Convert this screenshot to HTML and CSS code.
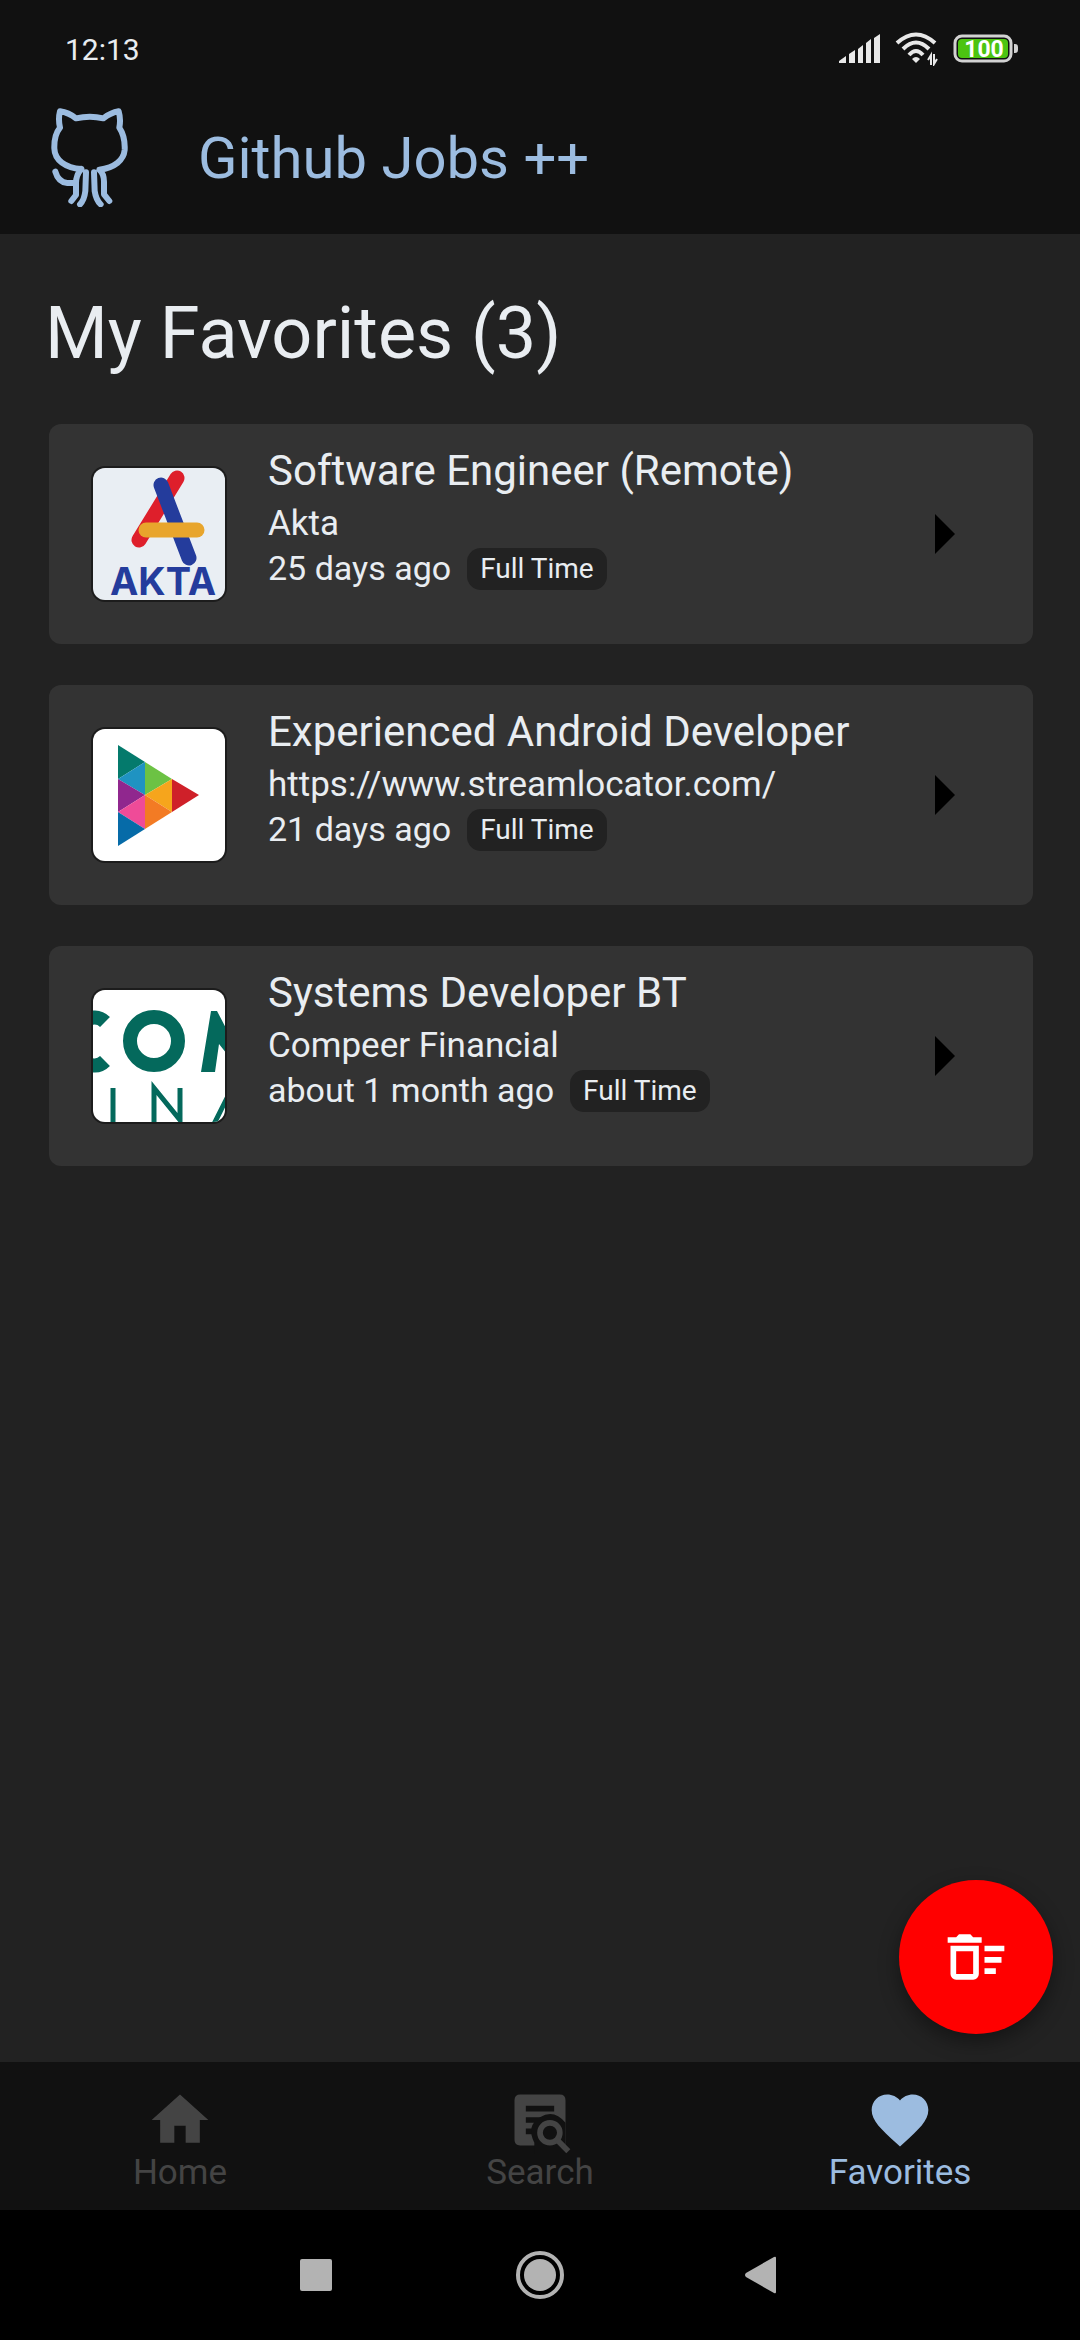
FILE: index.html
```html
<!DOCTYPE html>
<html lang="en">
<head>
<meta charset="utf-8">
<meta name="viewport" content="width=device-width, initial-scale=1">
<title>Github Jobs ++</title>
<link rel="stylesheet" href="styles.css">
</head>
<body>
<div class="app">
  <header class="header">
    <div class="status">
      <span class="clock">12:13</span>
      <div class="status-icons">
        <svg width="42" height="30" viewBox="0 0 42 30" fill="#e8e8e8" aria-hidden="true">
          <path d="M0 29V27L7 22V29ZM10 29V20L16 16V29ZM19 29V15L24 11V29ZM27 29V9L32 5V29ZM35 29V4L41 0V29Z"/>
        </svg>
        <svg width="44" height="34" viewBox="0 0 44 34" fill="none" stroke="#e8e8e8" stroke-width="4" aria-hidden="true">
          <path d="M2 11Q21 -6 40 11M8 17Q21 4 34 17M14 23Q21 15 28 23"/>
          <path d="M17 27Q21 23 25 27L21 31Z" fill="#e8e8e8" stroke="none"/>
          <path d="M36 33V23L33 28M39 22V32L42 27" stroke-width="2"/>
        </svg>
        <svg width="66" height="30" viewBox="0 0 66 30" aria-label="Battery 100">
          <rect x="2" y="2" width="56" height="25" rx="7" fill="#111" stroke="#d2d2d2" stroke-width="3"/>
          <rect x="5" y="5" width="50" height="19" rx="4" fill="#4cc411"/>
          <path d="M61 10h1q3 0 3 3v3q0 3-3 3h-1z" fill="#d2d2d2"/>
          <text class="battery-text" x="31" y="23" text-anchor="middle">100</text>
        </svg>
      </div>
    </div>
    <div class="app-bar">
      <svg class="octocat" viewBox="30 36 240 300" aria-hidden="true">
        <path d="M124 222C75 218 44 195 43 160Q42 120 60 98Q54 72 60 49Q86 53 108 70Q150 60 190 70Q212 53 236 49Q243 72 238 98Q256 125 254 165C251 195 225 218 178 224Q192 236 192 260V298L208 318M124 222Q108 240 108 264V300L94 318M46 230Q55 262 82 264H106M138 232L136 288Q133 315 120 328M162 232L164 288Q168 315 182 328"/>
      </svg>
      <span class="app-name">Github Jobs ++</span>
    </div>
  </header>

  <main class="main">
    <h1 class="heading">My Favorites (3)</h1>
    <ul class="jobs">
      <li>
        <a class="card" href="#akta">
          <svg class="logo" viewBox="0 0 132 132" aria-hidden="true">
            <rect width="132" height="132" fill="#e9eef3"/>
            <g fill="none" stroke-width="15" stroke-linecap="round">
              <path d="M46 72L84 10" stroke="#de1f2b"/>
              <path d="M68 17L96 90" stroke="#243c9c"/>
              <path d="M53 62H104" stroke="#e8a52c"/>
            </g>
            <text class="akta-text" x="70" y="127" text-anchor="middle">AKTA</text>
          </svg>
          <div class="info">
            <h2 class="title">Software Engineer (Remote)</h2>
            <p class="line company">Akta</p>
            <p class="line meta">25 days ago <span class="badge">Full Time</span></p>
          </div>
          <svg class="arrow" viewBox="0 0 20 40" aria-hidden="true"><path d="M0 0L20 20L0 40Z"/></svg>
        </a>
      </li>
      <li>
        <a class="card" href="#streamlocator">
          <svg class="logo" viewBox="0 0 132 132" aria-hidden="true">
            <rect width="132" height="132" fill="#fff"/>
            <path d="M25 16L52 33L25 50Z" fill="#047a6c"/>
            <path d="M25 50L52 33V66Z" fill="#1f93c2"/>
            <path d="M52 33L79 50L52 66Z" fill="#6cc244"/>
            <path d="M25 50L52 66L25 83Z" fill="#90278e"/>
            <path d="M52 66L79 50V83Z" fill="#f6a51c"/>
            <path d="M79 50L106 66L79 83Z" fill="#cf2029"/>
            <path d="M25 83L52 66V100Z" fill="#ef4b98"/>
            <path d="M52 66L79 83L52 100Z" fill="#f37b24"/>
            <path d="M25 83L52 100L25 117Z" fill="#066ba8"/>
          </svg>
          <div class="info">
            <h2 class="title">Experienced Android Developer</h2>
            <p class="line company">https://www.streamlocator.com/</p>
            <p class="line meta">21 days ago <span class="badge">Full Time</span></p>
          </div>
          <svg class="arrow" viewBox="0 0 20 40" aria-hidden="true"><path d="M0 0L20 20L0 40Z"/></svg>
        </a>
      </li>
      <li>
        <a class="card" href="#compeer">
          <svg class="logo" viewBox="0 0 132 132" aria-hidden="true">
            <rect width="132" height="132" fill="#fff"/>
            <g fill="none" stroke="#04695c">
              <path d="M12 32Q6 26 -2 28M12 71Q6 77 -2 75" stroke-width="14"/>
              <circle cx="61" cy="51" r="24" stroke-width="14"/>
              <path d="M108 82L118 21H124L134 40V64L126 54L122 82Z" fill="#04695c" stroke="none"/>
              <path d="M20 98V134M61 134V98L87 130V98M121 134L136 104" stroke-width="5"/>
            </g>
          </svg>
          <div class="info">
            <h2 class="title">Systems Developer BT</h2>
            <p class="line company">Compeer Financial</p>
            <p class="line meta">about 1 month ago <span class="badge">Full Time</span></p>
          </div>
          <svg class="arrow" viewBox="0 0 20 40" aria-hidden="true"><path d="M0 0L20 20L0 40Z"/></svg>
        </a>
      </li>
    </ul>
    <button class="fab" type="button" aria-label="Clear favorites">
      <svg width="68" height="68" viewBox="0 0 24 24" fill="#fff" aria-hidden="true">
        <path d="M15 16h4v2h-4v-2m0-8h7v2h-7V8m0 4h6v2h-6v-2M3 18a2 2 0 0 0 2 2h6a2 2 0 0 0 2-2V8H3v10m2-8h6v8H5v-8m5-6H6L5 5H2v2h12V5h-3l-1-1z"/>
      </svg>
    </button>
  </main>

  <nav class="tabs" aria-label="Main">
    <a class="tab" href="#home">
      <svg class="tab-icon" viewBox="0 0 24 24" aria-hidden="true"><path d="M10 20v-6h4v6h5v-8h3L12 3 2 12h3v8z"/></svg>
      <span>Home</span>
    </a>
    <a class="tab" href="#search">
      <svg class="tab-icon" viewBox="0 0 24 24" aria-hidden="true">
        <path fill-rule="evenodd" d="M5 3H19Q21 3 21 5V21H5Q3 21 3 19V5Q3 3 5 3ZM7 7V9H17V7ZM7 11V13H15V11ZM7 15V17H12V15Z"/>
        <path fill="#111" d="M21 13V24H10V20Q7 14 12 11Q17 8 21 13Z"/>
        <circle cx="15.500" cy="16.500" r="3.500" fill="#111" stroke="currentColor" stroke-width="2"/>
        <path fill="none" stroke="currentColor" stroke-width="2" d="M18 19L22 23"/>
      </svg>
      <span>Search</span>
    </a>
    <a class="tab tab-active" href="#favorites" aria-current="page">
      <svg class="tab-icon" viewBox="0 0 24 24" aria-hidden="true"><path d="M12 21.350l-1.450-1.320C5.400 15.360 2 12.270 2 8.500 2 5.410 4.420 3 7.500 3c1.740 0 3.410.810 4.500 2.080C13.090 3.810 14.760 3 16.500 3 19.580 3 22 5.410 22 8.500c0 3.770-3.400 6.860-8.550 11.530L12 21.350z"/></svg>
      <span>Favorites</span>
    </a>
  </nav>

  <div class="system-nav">
    <button class="sys" type="button" aria-label="Recent apps">
      <svg width="32" height="32" viewBox="0 0 32 32"><rect width="32" height="32" rx="2"/></svg>
    </button>
    <button class="sys" type="button" aria-label="Home screen">
      <svg width="50" height="50" viewBox="0 0 50 50"><circle cx="25" cy="25" r="22" fill="none" stroke="#b3b3b3" stroke-width="4"/><circle cx="25" cy="25" r="16"/></svg>
    </button>
    <button class="sys" type="button" aria-label="Back">
      <svg width="38" height="38" viewBox="0 0 38 38"><path d="M1 17Q-1 19 1 21L29 37Q31 38 31 36V2Q31 0 29 1Z"/></svg>
    </button>
  </div>
</div>
</body>
</html>
```
FILE: styles.css
```css
* {
  box-sizing: border-box;
  margin: 0;
  padding: 0;
}

body {
  background: #222;
  color: #e9edf1;
  font-family: Roboto, "Noto Sans", sans-serif;
}

svg {
  display: block;
  flex: none;
}

a {
  color: inherit;
  text-decoration: none;
}

button {
  border: 0;
  cursor: pointer;
}

.app {
  display: flex;
  flex-direction: column;
  min-height: 100vh;
}

/* Status bar and app bar */

.header {
  background: #111;
  padding-bottom: 18px;
}

.status {
  display: flex;
  align-items: center;
  justify-content: space-between;
  height: 98px;
  padding: 0 61px 0 65px;
}

.clock {
  font-size: 30px;
}

.status-icons {
  display: flex;
  align-items: center;
  gap: 14px;
}

.battery-text {
  font-size: 23px;
  font-weight: 700;
  fill: #fff;
}

.app-bar {
  display: flex;
  align-items: center;
  gap: 68px;
  height: 118px;
  padding: 0 50px;
  color: #9cbce0;
}

.octocat {
  width: 80px;
  height: 100px;
  fill: none;
  stroke: currentColor;
  stroke-width: 18;
  stroke-linecap: round;
  stroke-linejoin: round;
}

.app-name {
  padding-top: 2px;
  font-size: 58px;
}

/* Favorites list */

.main {
  position: relative;
  flex: 1;
  padding: 58px 47px 200px 45px;
}

.heading {
  font-size: 72px;
  font-weight: 400;
  line-height: 84px;
}

.jobs {
  display: grid;
  gap: 41px;
  margin: 48px 0 0 4px;
  list-style: none;
}

.card {
  display: flex;
  align-items: center;
  min-height: 220px;
  padding: 0 78px 0 42px;
  border-radius: 12px;
  background: #333;
}

.logo {
  width: 136px;
  height: 136px;
  border: 2px solid #1c1c1c;
  border-radius: 14px;
}

.akta-text {
  font-family: Inter, sans-serif;
  font-size: 38px;
  font-weight: 700;
  fill: #243c9c;
}

.info {
  flex: 1;
  align-self: flex-start;
  padding: 17px 20px 16px 41px;
}

.title {
  font-size: 42px;
  font-weight: 400;
  line-height: 60px;
}

.line {
  font-size: 34px;
  line-height: 45px;
}

.company {
  font-size: 35px;
}

.meta {
  display: flex;
  align-items: center;
  gap: 16px;
}

.badge {
  padding: 0 13px;
  border-radius: 14px;
  background: #222;
  font-size: 28px;
  line-height: 42px;
}

.arrow {
  width: 20px;
  height: 40px;
  fill: #000;
}

.fab {
  position: absolute;
  right: 27px;
  bottom: 28px;
  display: grid;
  place-items: center;
  width: 154px;
  height: 154px;
  border-radius: 50%;
  background: #f00;
  box-shadow: 0 8px 20px rgba(0, 0, 0, 0.4);
}

/* Bottom navigation */

.tabs {
  display: grid;
  grid-template-columns: repeat(3, 1fr);
  background: #111;
  color: #444;
}

.tab {
  display: flex;
  flex-direction: column;
  align-items: center;
  padding: 24px 0 18px;
  font-size: 35px;
  line-height: 38px;
}

.tab-active {
  color: #9cbce0;
}

.tab-icon {
  width: 68px;
  height: 68px;
  fill: currentColor;
}

.system-nav {
  display: flex;
  align-items: center;
  justify-content: center;
  height: 130px;
  background: #000;
}

.sys {
  display: grid;
  place-items: center;
  width: 224px;
  height: 100px;
  background: none;
  fill: #b3b3b3;
}
```
